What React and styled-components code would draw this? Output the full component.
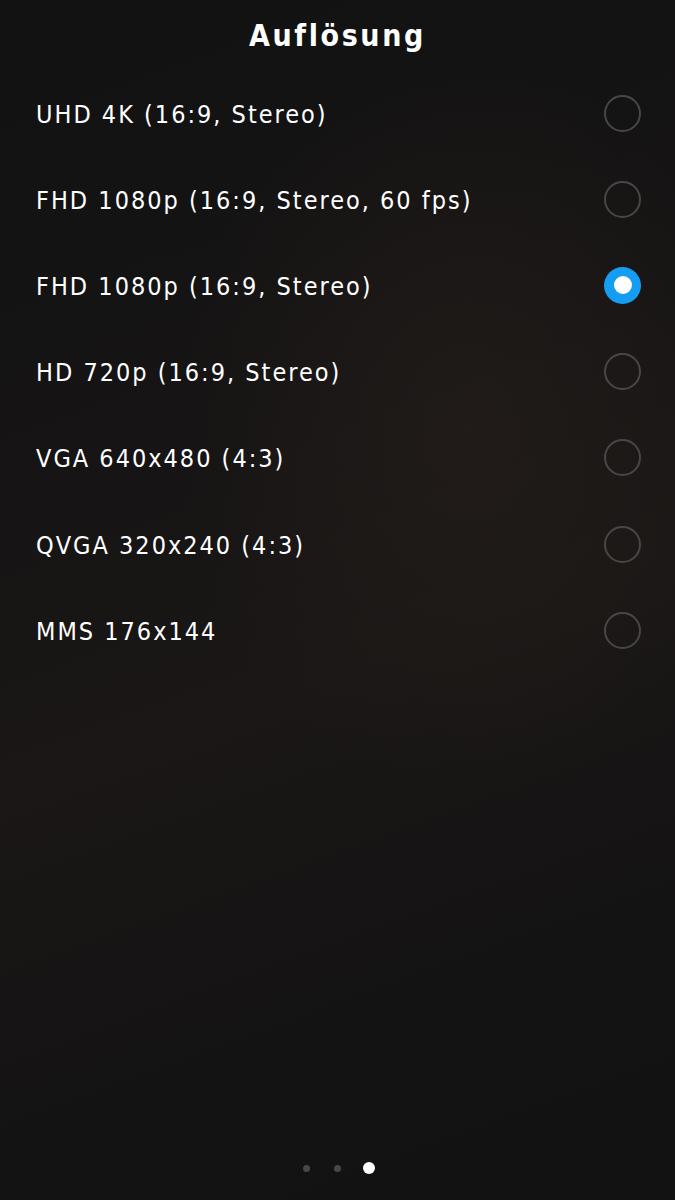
import React from "react";
import styled, { createGlobalStyle } from "styled-components";

const Global = createGlobalStyle`
  html, body { margin: 0; padding: 0; background: #131313; }
  * { box-sizing: border-box; }
`;

const Screen = styled.div`
  width: 675px;
  height: 1200px;
  display: flex;
  flex-direction: column;
  color: #ffffff;
  font-family: "DejaVu Sans Condensed", "DejaVu Sans", sans-serif;
  background:
    radial-gradient(ellipse 420px 520px at 470px 430px, rgba(40, 33, 29, 0.55), rgba(40, 33, 29, 0) 70%),
    linear-gradient(160deg, #121212 0%, #161414 35%, #1a1716 55%, #141313 80%, #121212 100%);
`;

const Header = styled.header`
  height: 70px;
  display: flex;
  align-items: flex-start;
  justify-content: center;
  padding-top: 21px;
`;

const Title = styled.h1`
  margin: 0;
  font-size: 30px;
  font-weight: 700;
  letter-spacing: 2.6px;
  line-height: 1;
`;

const List = styled.ul`
  list-style: none;
  margin: 0;
  padding: 0;
  display: flex;
  flex-direction: column;
`;

const Row = styled.li`
  height: 86.2px;
  display: flex;
  align-items: center;
  justify-content: space-between;
  padding: 0 34px 0 36px;
`;

const Label = styled.span`
  font-size: 25px;
  letter-spacing: 2px;
  line-height: 1;
  padding-top: 2px;
`;

const Radio = styled.span`
  width: 37px;
  height: 37px;
  border-radius: 50%;
  display: flex;
  align-items: center;
  justify-content: center;
  border: ${(p) => (p.$checked ? "none" : "2px solid #474747")};
  background: ${(p) => (p.$checked ? "#159cf3" : "transparent")};
`;

const RadioDot = styled.span`
  width: 18px;
  height: 18px;
  border-radius: 50%;
  background: #ffffff;
`;

const Spacer = styled.div`
  flex: 1;
`;

const Pager = styled.div`
  display: flex;
  align-items: center;
  justify-content: center;
  padding-bottom: 26px;
  padding-left: 1px;
`;

const PageDot = styled.span`
  width: ${(p) => (p.$active ? "12px" : "7px")};
  height: ${(p) => (p.$active ? "12px" : "7px")};
  margin: 0 ${(p) => (p.$active ? "10.5px" : "12px")};
  border-radius: 50%;
  background: ${(p) => (p.$active ? "#ffffff" : "#474747")};
`;

const items = [
  "UHD 4K (16:9, Stereo)",
  "FHD 1080p (16:9, Stereo, 60 fps)",
  "FHD 1080p (16:9, Stereo)",
  "HD 720p (16:9, Stereo)",
  "VGA 640x480 (4:3)",
  "QVGA 320x240 (4:3)",
  "MMS 176x144",
];

export default function App() {
  const selected = 2;
  return (
    <>
      <Global />
      <Screen>
        <Header>
          <Title>Auflösung</Title>
        </Header>
        <List>
          {items.map((t, i) => (
            <Row key={t}>
              <Label>{t}</Label>
              <Radio $checked={i === selected}>{i === selected && <RadioDot />}</Radio>
            </Row>
          ))}
        </List>
        <Spacer />
        <Pager>
          <PageDot />
          <PageDot />
          <PageDot $active />
        </Pager>
      </Screen>
    </>
  );
}
